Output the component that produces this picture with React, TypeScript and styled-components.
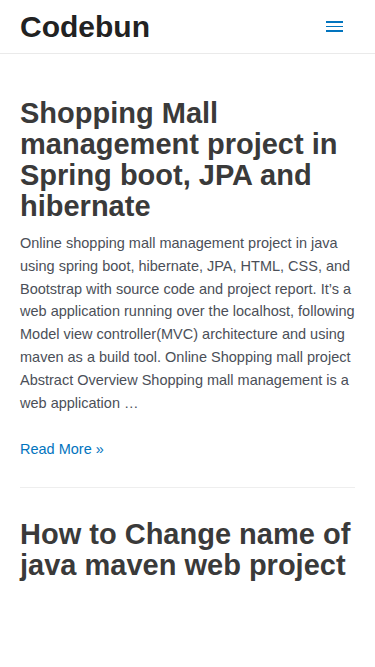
import React from "react";
import styled, { createGlobalStyle } from "styled-components";

const GlobalStyle = createGlobalStyle`
  body {
    margin: 0;
    background: #ffffff;
    font-family: "Liberation Sans", Arial, Helvetica, sans-serif;
  }
`;

const Header = styled.header`
  display: flex;
  align-items: center;
  justify-content: space-between;
  height: 54px;
  padding: 0 20px;
  border-bottom: 1px solid #eaeaea;
  box-sizing: border-box;
`;

const Logo = styled.a`
  font-size: 30px;
  font-weight: 700;
  color: #222222;
  text-decoration: none;
  line-height: 1;
`;

const MenuToggle = styled.button`
  display: flex;
  flex-direction: column;
  gap: 3px;
  width: 17px;
  padding: 0;
  margin-right: 12px;
  border: none;
  background: none;
  cursor: pointer;

  span {
    display: block;
    height: 1.5px;
    background: #0274be;
  }
`;

const Main = styled.main`
  padding: 44px 20px 0;
`;

const Article = styled.article<{ divided?: boolean }>`
  padding-bottom: 26px;
  border-bottom: ${(p) => (p.divided ? "1px solid #eeeeee" : "none")};
  margin-bottom: 31px;
`;

const Title = styled.h2`
  margin: 0 0 10px;
  font-size: 29px;
  font-weight: 700;
  line-height: 31px;
  color: #3a3a3a;
`;

const Excerpt = styled.p`
  margin: 0 0 24px;
  font-size: 14.5px;
  line-height: 22.8px;
  color: #4b4f58;
`;

const ReadMore = styled.a`
  display: inline-block;
  font-size: 14.5px;
  line-height: 22.8px;
  color: #0274be;
  text-decoration: none;
`;

export default function App() {
  return (
    <>
      <GlobalStyle />
      <Header>
        <Logo href="#">Codebun</Logo>
        <MenuToggle aria-label="Menu">
          <span />
          <span />
          <span />
        </MenuToggle>
      </Header>
      <Main>
        <Article divided>
          <Title>Shopping Mall management project in Spring boot, JPA and hibernate</Title>
          <Excerpt>
            Online shopping mall management project in java using spring boot, hibernate, JPA, HTML, CSS, and
            Bootstrap with source code and project report. It’s a web application running over the localhost,
            following Model view controller(MVC) architecture and using maven as a build tool. Online Shopping
            mall project Abstract Overview Shopping mall management is a web application …
          </Excerpt>
          <ReadMore href="#">Read More »</ReadMore>
        </Article>
        <Article>
          <Title>How to Change name of java maven web project</Title>
        </Article>
      </Main>
    </>
  );
}
